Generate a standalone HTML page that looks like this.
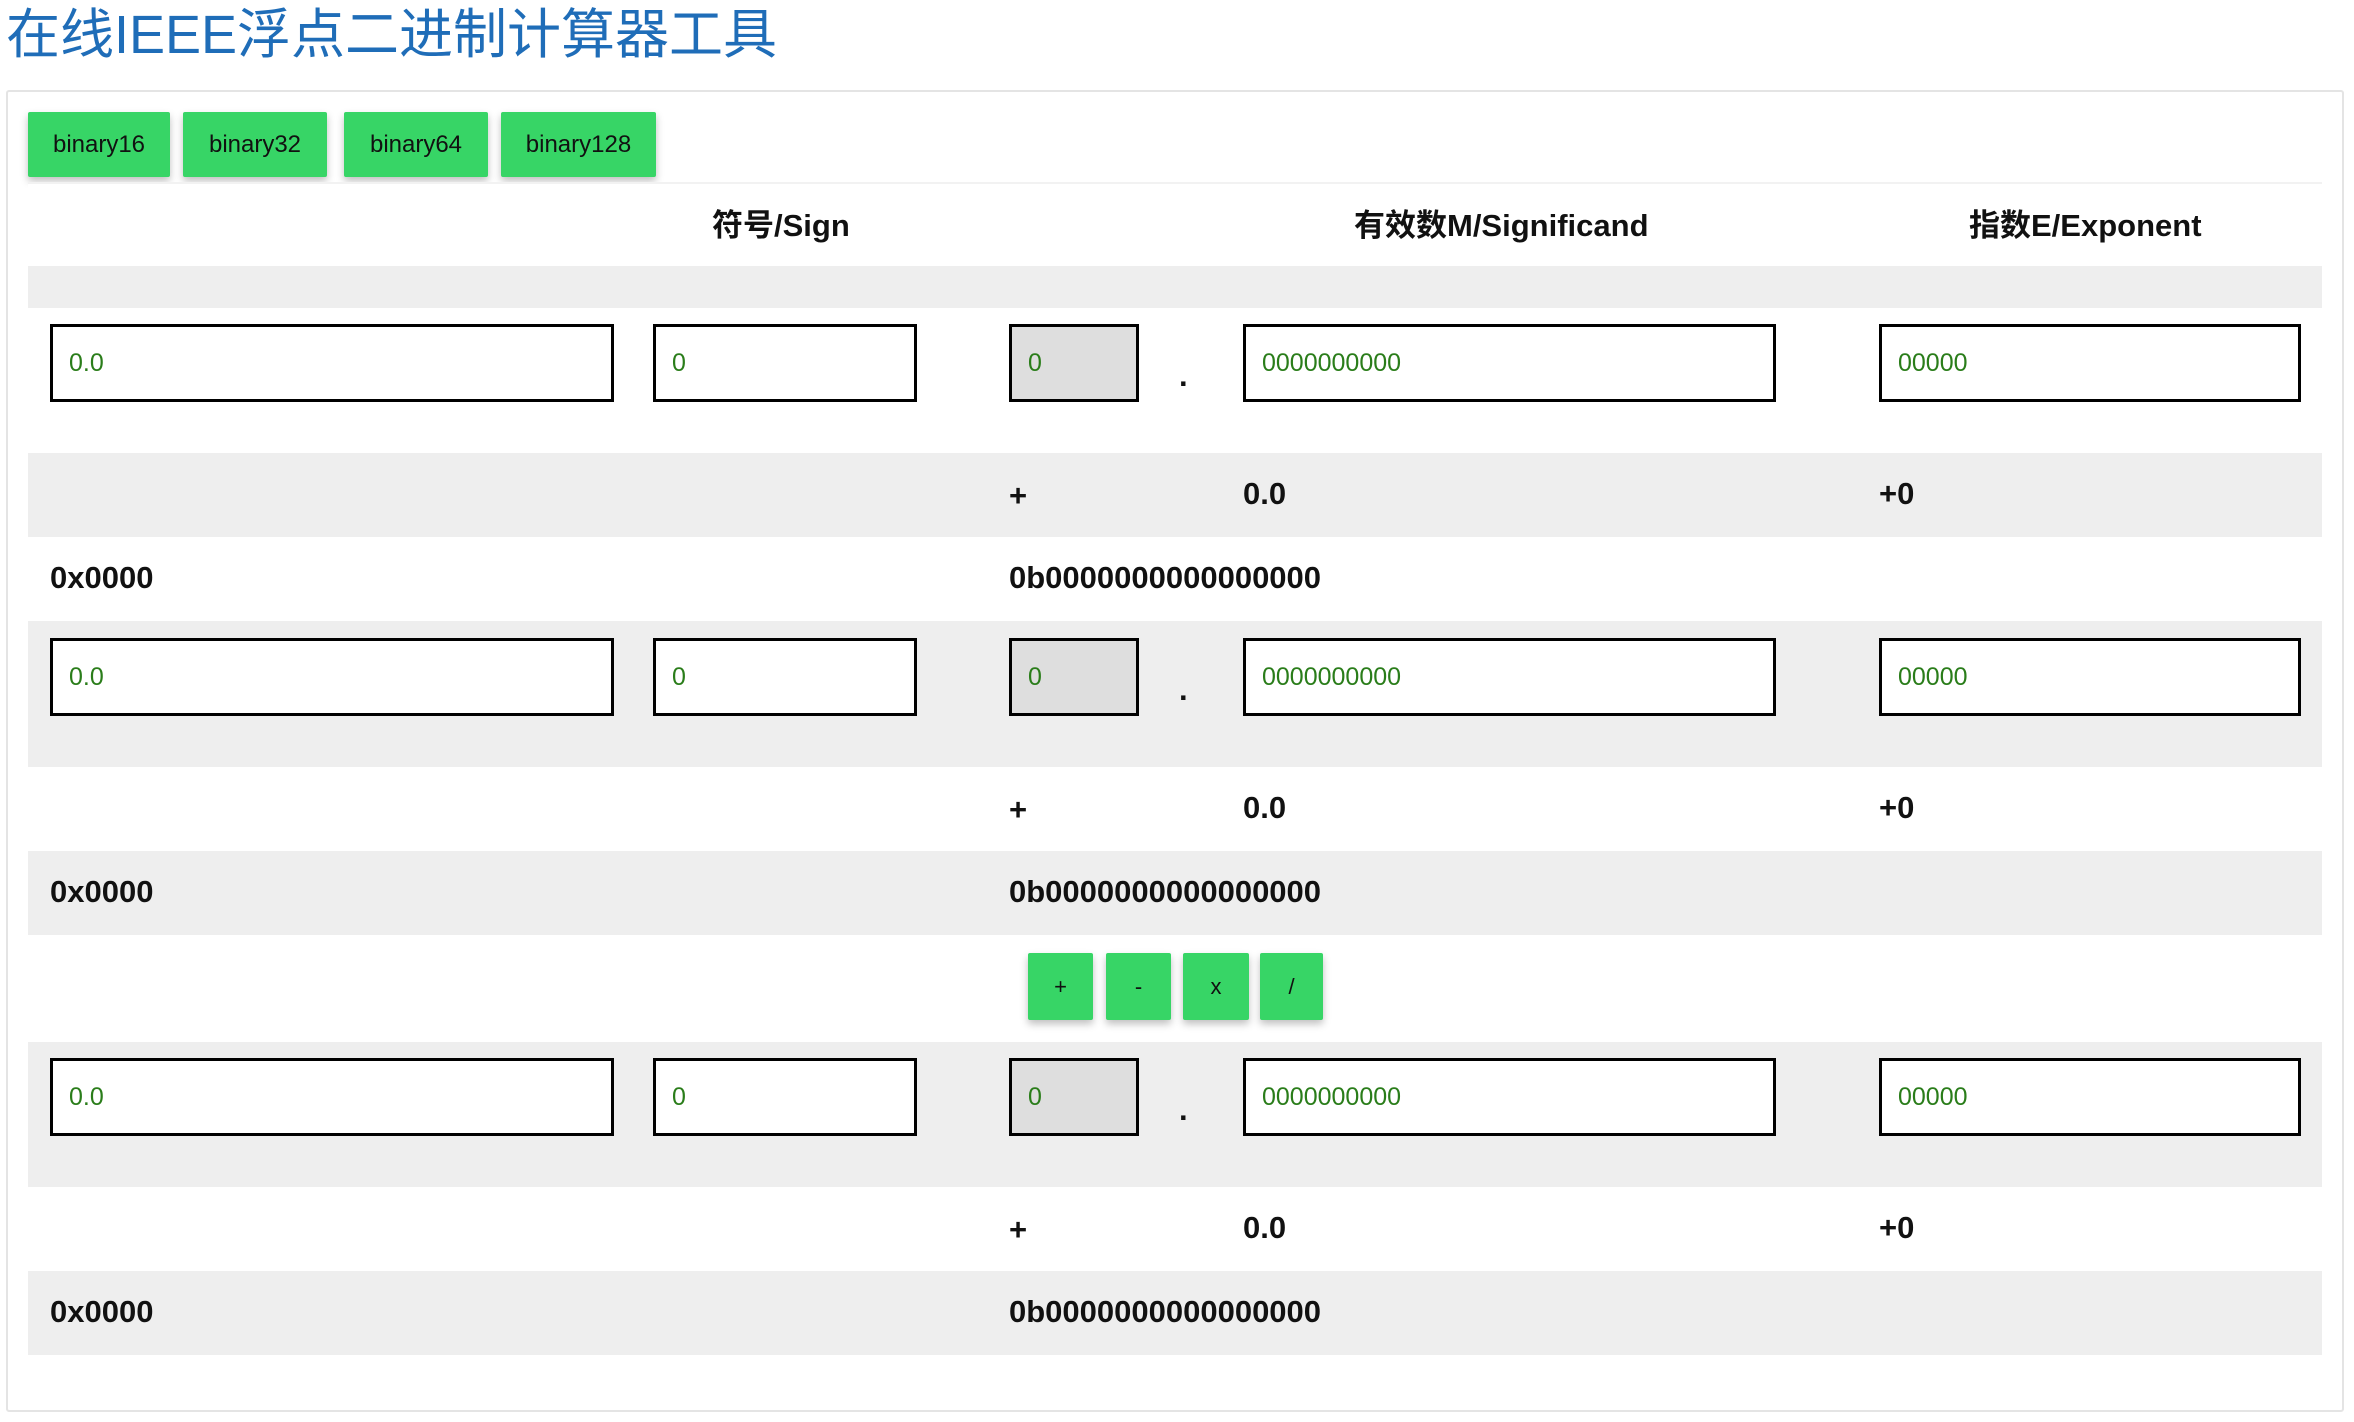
<!DOCTYPE html>
<html><head><meta charset="utf-8"><style>
*{box-sizing:border-box;margin:0;padding:0}
body{width:2354px;height:1422px;background:#fff;font-family:"Liberation Sans","Noto Sans CJK SC",sans-serif;position:relative;overflow:hidden}
.a{position:absolute}
h1{position:absolute;left:6px;top:2px;font-size:54px;font-weight:normal;color:#1f6db8;letter-spacing:0px;line-height:66px}
.panel{left:6px;top:90px;width:2338px;height:1322px;border:2px solid #e4e4e4;border-radius:3px}
.btn{background:#37d566;color:#111;font-size:24px;text-align:center;box-shadow:0 4px 8px rgba(0,0,0,.25);display:flex;align-items:center;justify-content:center;border-radius:2px}
.row{left:28px;width:2294px}
.g{background:#eee}
.w{background:#fff}
.th{font-size:31px;font-weight:bold;color:#111;top:200px;white-space:nowrap}
.in{border:3px solid #000;background:#fff;color:#2a7d1a;font-size:25px;padding-left:16px;display:flex;align-items:center;height:78px}
.t{font-size:31px;font-weight:bold;color:#111;white-space:nowrap}
</style></head><body>
<h1>在线IEEE浮点二进制计算器工具</h1>
<div class="a panel"></div>
<div class="a btn" style="left:28px;top:112px;width:142px;height:65px">binary16</div>
<div class="a btn" style="left:183px;top:112px;width:144px;height:65px">binary32</div>
<div class="a btn" style="left:344px;top:112px;width:144px;height:65px">binary64</div>
<div class="a btn" style="left:501px;top:112px;width:155px;height:65px">binary128</div>

<div class="a row w" style="top:182px;height:84px;border-top:2px solid #f2f2f2"></div>
<div class="a th" style="left:712px">符号/Sign</div>
<div class="a th" style="left:1354px">有效数M/Significand</div>
<div class="a th" style="left:1969px">指数E/Exponent</div>
<div class="a row g" style="top:266px;height:42px"></div>

<!-- block 1 -->
<div class="a row w" style="top:308px;height:145px"></div>
<div class="a row g" style="top:453px;height:84px"></div>
<div class="a row w" style="top:537px;height:84px"></div>
<!-- block 2 -->
<div class="a row g" style="top:621px;height:146px"></div>
<div class="a row w" style="top:767px;height:84px"></div>
<div class="a row g" style="top:851px;height:84px"></div>
<!-- ops -->
<div class="a row w" style="top:935px;height:107px"></div>
<!-- block 3 -->
<div class="a row g" style="top:1042px;height:145px"></div>
<div class="a row w" style="top:1187px;height:84px"></div>
<div class="a row g" style="top:1271px;height:84px"></div>

<div class="a btn" style="left:1028px;top:953px;width:65px;height:67px;font-size:22px">+</div>
<div class="a btn" style="left:1106px;top:953px;width:65px;height:67px;font-size:22px">-</div>
<div class="a btn" style="left:1183px;top:953px;width:66px;height:67px;font-size:22px">x</div>
<div class="a btn" style="left:1260px;top:953px;width:63px;height:67px;font-size:22px">/</div>

<!-- inputs block1 top 324 -->
<div class="a in" style="left:50px;top:324px;width:564px">0.0</div>
<div class="a in" style="left:653px;top:324px;width:264px">0</div>
<div class="a in" style="left:1009px;top:324px;width:130px;background:#dedede">0</div>
<div class="a t" style="left:1179px;top:358px">.</div>
<div class="a in" style="left:1243px;top:324px;width:533px">0000000000</div>
<div class="a in" style="left:1879px;top:324px;width:422px">00000</div>
<div class="a t" style="left:1009px;top:478px">+</div>
<div class="a t" style="left:1243px;top:476px">0.0</div>
<div class="a t" style="left:1879px;top:476px">+0</div>
<div class="a t" style="left:50px;top:560px">0x0000</div>
<div class="a t" style="left:1009px;top:560px">0b0000000000000000</div>

<!-- block2 top 638 -->
<div class="a in" style="left:50px;top:638px;width:564px">0.0</div>
<div class="a in" style="left:653px;top:638px;width:264px">0</div>
<div class="a in" style="left:1009px;top:638px;width:130px;background:#dedede">0</div>
<div class="a t" style="left:1179px;top:672px">.</div>
<div class="a in" style="left:1243px;top:638px;width:533px">0000000000</div>
<div class="a in" style="left:1879px;top:638px;width:422px">00000</div>
<div class="a t" style="left:1009px;top:792px">+</div>
<div class="a t" style="left:1243px;top:790px">0.0</div>
<div class="a t" style="left:1879px;top:790px">+0</div>
<div class="a t" style="left:50px;top:874px">0x0000</div>
<div class="a t" style="left:1009px;top:874px">0b0000000000000000</div>

<!-- block3 top 1058 -->
<div class="a in" style="left:50px;top:1058px;width:564px">0.0</div>
<div class="a in" style="left:653px;top:1058px;width:264px">0</div>
<div class="a in" style="left:1009px;top:1058px;width:130px;background:#dedede">0</div>
<div class="a t" style="left:1179px;top:1092px">.</div>
<div class="a in" style="left:1243px;top:1058px;width:533px">0000000000</div>
<div class="a in" style="left:1879px;top:1058px;width:422px">00000</div>
<div class="a t" style="left:1009px;top:1212px">+</div>
<div class="a t" style="left:1243px;top:1210px">0.0</div>
<div class="a t" style="left:1879px;top:1210px">+0</div>
<div class="a t" style="left:50px;top:1294px">0x0000</div>
<div class="a t" style="left:1009px;top:1294px">0b0000000000000000</div>
</body></html>
